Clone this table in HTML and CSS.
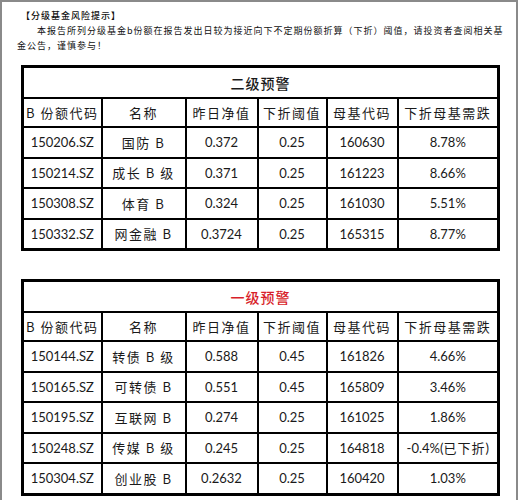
FILE: index.html
```html
<!DOCTYPE html>
<html lang="zh-CN">
<head>
<meta charset="utf-8">
<link rel="stylesheet" href="styles.css">
</head>
<body>
<div class="page">
  <div class="notice">
    <p class="n-title">【分级基金风险提示】</p>
    <p class="n-body">本报告所列分级基金b份额在报告发出日较为接近向下不定期份额折算（下折）阈值，请投资者查阅相关基金公告，谨慎参与！</p>
  </div>

  <table class="tbl">
    <colgroup>
      <col class="c1"><col class="c2"><col class="c3"><col class="c4"><col class="c5"><col class="c6">
    </colgroup>
    <tr class="title"><td colspan="6">二级预警</td></tr>
    <tr class="head"><td>B 份额代码</td><td>名称</td><td>昨日净值</td><td>下折阈值</td><td>母基代码</td><td>下折母基需跌</td></tr>
    <tr><td class="num">150206.SZ</td><td class="cn">国防 B</td><td class="num">0.372</td><td class="num">0.25</td><td class="num">160630</td><td class="num">8.78%</td></tr>
    <tr><td class="num">150214.SZ</td><td class="cn">成长 B 级</td><td class="num">0.371</td><td class="num">0.25</td><td class="num">161223</td><td class="num">8.66%</td></tr>
    <tr><td class="num">150308.SZ</td><td class="cn">体育 B</td><td class="num">0.324</td><td class="num">0.25</td><td class="num">161030</td><td class="num">5.51%</td></tr>
    <tr><td class="num">150332.SZ</td><td class="cn">网金融 B</td><td class="num">0.3724</td><td class="num">0.25</td><td class="num">165315</td><td class="num">8.77%</td></tr>
  </table>

  <table class="tbl second">
    <colgroup>
      <col class="c1"><col class="c2"><col class="c3"><col class="c4"><col class="c5"><col class="c6">
    </colgroup>
    <tr class="title red"><td colspan="6">一级预警</td></tr>
    <tr class="head"><td>B 份额代码</td><td>名称</td><td>昨日净值</td><td>下折阈值</td><td>母基代码</td><td>下折母基需跌</td></tr>
    <tr><td class="num">150144.SZ</td><td class="cn">转债 B 级</td><td class="num">0.588</td><td class="num">0.45</td><td class="num">161826</td><td class="num">4.66%</td></tr>
    <tr><td class="num">150165.SZ</td><td class="cn">可转债 B</td><td class="num">0.551</td><td class="num">0.45</td><td class="num">165809</td><td class="num">3.46%</td></tr>
    <tr><td class="num">150195.SZ</td><td class="cn">互联网 B</td><td class="num">0.274</td><td class="num">0.25</td><td class="num">161025</td><td class="num">1.86%</td></tr>
    <tr><td class="num">150248.SZ</td><td class="cn">传媒 B 级</td><td class="num">0.245</td><td class="num">0.25</td><td class="num">164818</td><td class="num">-0.4%(<span class="cjk">已下折</span>)</td></tr>
    <tr><td class="num">150304.SZ</td><td class="cn">创业股 B</td><td class="num">0.2632</td><td class="num">0.25</td><td class="num">160420</td><td class="num">1.03%</td></tr>
  </table>
</div>
</body>
</html>
```

FILE: styles.css
```css
html, body {
  margin: 0;
  padding: 0;
  background: #ffffff;
}
body {
  font-family: "Noto Sans CJK SC", sans-serif;
  color: #111;
}
.page {
  width: 514px;
  height: 498px;
  border: 2px solid #8a8a8a;
  border-bottom: none;
  background: #fff;
  overflow: hidden;
}
.notice {
  padding: 6px 0 0 15px;
  font-size: 9px;
  line-height: 15px;
  letter-spacing: 1px;
}
.notice p {
  margin: 0;
}
.n-title {
  padding-left: 4px;
  font-weight: 500;
}
.n-body {
  text-indent: 20px;
  width: 492px;
}
.tbl {
  border-collapse: collapse;
  width: 476px;
  margin: 12px 0 0 19px;
  border: 3px solid #000;
  table-layout: fixed;
}
.tbl.second {
  margin-top: 28px;
}
.c1 { width: 79px; }
.c2 { width: 84px; }
.c3 { width: 72px; }
.c4 { width: 69px; }
.c5 { width: 71px; }
.c6 { width: 101px; }
.tbl td {
  border: 2px solid #000;
  text-align: center;
  height: 28.5px;
  padding: 0;
  font-size: 13px;
  letter-spacing: 1px;
  color: #1a1a1a;
  white-space: nowrap;
}
.tbl tr.title td {
  height: 29px;
  font-size: 14px;
  letter-spacing: 1px;
  font-weight: 500;
}
.tbl tr.head td {
  height: 27px;
  font-size: 13px;
  letter-spacing: 1.5px;
}
.tbl tr.red td {
  color: #d81e2a;
}
.tbl td.num {
  font-family: "Lato", "Noto Sans CJK SC", sans-serif;
  font-size: 13px;
  letter-spacing: 0;
}
.tbl td.num .cjk {
  font-family: "Noto Sans CJK SC", sans-serif;
  letter-spacing: 1px;
}
.tbl td.cn {
  letter-spacing: 1.5px;
}
```
